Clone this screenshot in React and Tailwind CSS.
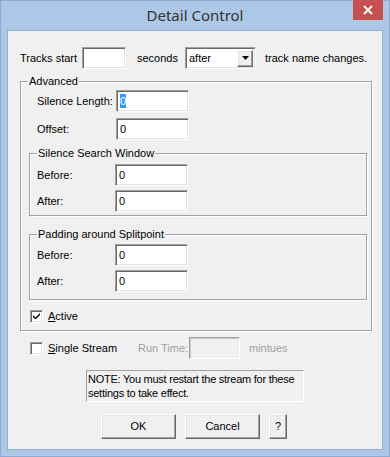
import React from "react";

const sunken =
  "border border-t-[#a0a0a0] border-l-[#a0a0a0] border-b-white border-r-white shadow-[inset_1px_1px_0_#696969,inset_-1px_-1px_0_#e3e3e3]";
const raised =
  "border border-t-white border-l-white border-b-[#696969] border-r-[#696969] shadow-[inset_-1px_-1px_0_#a0a0a0,inset_1px_1px_0_#e3e3e3]";

function Field({ value, selected, w = "w-[73px]" }) {
  return (
    <div className={`${sunken} ${w} h-[22px] bg-white flex items-center pl-[3px]`}>
      {selected ? (
        <span className="bg-[#3399ff] text-white leading-[14px]">{value}</span>
      ) : (
        <span>{value}</span>
      )}
    </div>
  );
}

function Row({ label, value, selected, labelW = "w-[79px]", className = "" }) {
  return (
    <div className={`flex items-center ${className}`}>
      <span className={labelW}>{label}</span>
      <Field value={value} selected={selected} />
    </div>
  );
}

function Group({ title, className = "", children }) {
  return (
    <div
      className={`relative border border-[#a0a0a0] shadow-[inset_1px_1px_0_white,1px_1px_0_white] ${className}`}
    >
      <span className="absolute -top-[8px] left-[7px] bg-[#f0f0f0] px-[1px] leading-[14px]">
        {title}
      </span>
      {children}
    </div>
  );
}

function Check({ checked }) {
  return (
    <div className={`${sunken} w-[13px] h-[13px] bg-white flex items-center justify-center`}>
      {checked && (
        <svg width="7" height="7" viewBox="0 0 7 7">
          <path d="M0 2 L0 4 L2 6 L3 6 L7 2 L7 0 L2.5 4.5 Z" fill="#000" />
        </svg>
      )}
    </div>
  );
}

export default function App() {
  return (
    <div
      className="w-[390px] h-[457px] bg-[#adc8e6] border border-[#8eaad0] flex flex-col text-[11px] text-black"
      style={{ fontFamily: '"Liberation Sans", Arial, sans-serif' }}
    >
      {/* Title bar */}
      <div className="relative h-[29px] flex items-center justify-center">
        <span
          className="text-[15px] text-[#333] -mt-[1px]"
          style={{ fontFamily: '"Noto Sans", "Open Sans", sans-serif' }}
        >
          Detail Control
        </span>
        <div className="absolute -top-[1px] right-[6px] w-[30px] h-[20px] bg-[#c75050] flex items-center justify-center">
          <svg width="10" height="10" viewBox="0 0 10 10">
            <path d="M1 1 L9 9 M9 1 L1 9" stroke="white" strokeWidth="2" />
          </svg>
        </div>
      </div>

      {/* Client */}
      <div className="mx-[6px] h-[420px] border border-[#95b0cf] bg-[#f0f0f0] flex flex-col">
        <div className="flex items-center mt-[16px] pl-[12px]">
          <span className="w-[62px]">Tracks start</span>
          <Field value="" w="w-[44px]" />
          <span className="ml-[11px] w-[48px]">seconds</span>
          <div className={`${sunken} w-[71px] h-[22px] bg-white flex items-center justify-between pl-[3px] pr-[2px]`}>
            <span>after</span>
            <div className={`${raised} w-[16px] h-[17px] bg-[#f0f0f0] flex items-center justify-center`}>
              <svg width="7" height="4" viewBox="0 0 7 4">
                <path d="M0 0 L7 0 L3.5 4 Z" fill="#000" />
              </svg>
            </div>
          </div>
          <span className="ml-[9px]">track name changes.</span>
        </div>

        <Group title="Advanced" className="ml-[12px] mt-[12px] w-[352px] h-[250px] pt-[8px] pl-[16px]">
          <Row label="Silence Length:" value="0" selected />
          <Row label="Offset:" value="0" className="mt-[6px]" />

          <Group
            title="Silence Search Window"
            className="-ml-[8px] mt-[13px] w-[338px] h-[63px] pt-[10px] pl-[7px]"
          >
            <Row label="Before:" value="0" labelW="w-[78px]" />
            <Row label="After:" value="0" labelW="w-[78px]" className="mt-[4px]" />
          </Group>

          <Group
            title="Padding around Splitpoint"
            className="-ml-[8px] mt-[18px] w-[338px] h-[66px] pt-[9px] pl-[7px]"
          >
            <Row label="Before:" value="0" labelW="w-[78px]" />
            <Row label="After:" value="0" labelW="w-[78px]" className="mt-[4px]" />
          </Group>

          <div className="flex items-center -ml-[7px] mt-[8px]">
            <Check checked />
            <span className="ml-[5px]">
              <span className="underline">A</span>ctive
            </span>
          </div>
        </Group>

        <div className="flex items-center mt-[6px] pl-[22px] h-[22px]">
          <Check />
          <span className="ml-[5px] w-[90px]">
            <span className="underline">S</span>ingle Stream
          </span>
          <span className="text-[#a0a0a0] w-[51px]">Run Time:</span>
          <div className="w-[51px] h-[22px] border border-t-[#a0a0a0] border-l-[#a0a0a0] border-b-white border-r-white shadow-[inset_1px_1px_0_#c8c8c8]" />
          <span className="text-[#a0a0a0] ml-[9px]">mintues</span>
        </div>

        <div className="ml-[78px] mt-[11px] w-[218px] h-[32px] border border-t-[#a0a0a0] border-l-[#a0a0a0] border-b-white border-r-white pl-[1px] leading-[14px] pt-[1px] whitespace-nowrap text-[11px] tracking-[-0.25px]">
          NOTE: You must restart the stream for these
          <br />
          settings to take effect.
        </div>

        <div className="flex mt-[12px] ml-[93px] gap-[9px]">
          <div className={`${raised} w-[75px] h-[25px] flex items-center justify-center`}>OK</div>
          <div className={`${raised} w-[75px] h-[25px] flex items-center justify-center`}>Cancel</div>
          <div className={`${raised} w-[18px] h-[25px] flex items-center justify-center`}>?</div>
        </div>
      </div>
    </div>
  );
}
